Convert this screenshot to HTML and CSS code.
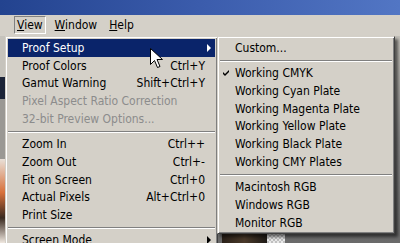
FILE: index.html
```html
<!DOCTYPE html>
<html>
<head>
<meta charset="utf-8">
<link rel="stylesheet" href="styles.css">
</head>
<body>
<div class="screen">
  <div class="titlebar"></div>
  <div class="menubar">
    <span class="mb-item pressed"><u>V</u>iew</span>
    <span class="mb-item"><u>W</u>indow</span>
    <span class="mb-item"><u>H</u>elp</span>
  </div>
  <div class="workspace">
    <div class="toolbox">
      <div class="tb tb-gray"></div>
      <div class="tb tb-dark"></div>
      <div class="tb tb-mid"></div>
      <div class="tb tb-photo"></div>
    </div>
    <div class="canvas">
      <div class="photo">
        <div class="ph-dark"></div>
        <div class="ph-check"></div>
      </div>
    </div>

    <div class="menu main-menu">
      <div class="row active"><span class="label">Proof Setup</span><span class="arrow white"></span></div>
      <div class="row"><span class="label">Proof Colors</span><span class="key">Ctrl+Y</span></div>
      <div class="row"><span class="label">Gamut Warning</span><span class="key">Shift+Ctrl+Y</span></div>
      <div class="row disabled"><span class="label">Pixel Aspect Ratio Correction</span></div>
      <div class="row disabled"><span class="label">32-bit Preview Options...</span></div>
      <div class="sep"></div>
      <div class="row"><span class="label">Zoom In</span><span class="key">Ctrl++</span></div>
      <div class="row"><span class="label">Zoom Out</span><span class="key">Ctrl+-</span></div>
      <div class="row"><span class="label">Fit on Screen</span><span class="key">Ctrl+0</span></div>
      <div class="row"><span class="label">Actual Pixels</span><span class="key">Alt+Ctrl+0</span></div>
      <div class="row"><span class="label">Print Size</span></div>
      <div class="sep"></div>
      <div class="row"><span class="label">Screen Mode</span><span class="arrow"></span></div>
    </div>

    <div class="menu sub-menu">
      <div class="row"><span class="label">Custom...</span></div>
      <div class="sep"></div>
      <div class="row checked"><svg class="check" width="7" height="7" viewBox="0 0 7 7"><path d="M0 3 L2 5 L6 1 L6 3 L2 7 L0 5 Z" fill="#000"/></svg><span class="label">Working CMYK</span></div>
      <div class="row"><span class="label">Working Cyan Plate</span></div>
      <div class="row"><span class="label">Working Magenta Plate</span></div>
      <div class="row"><span class="label">Working Yellow Plate</span></div>
      <div class="row"><span class="label">Working Black Plate</span></div>
      <div class="row"><span class="label">Working CMY Plates</span></div>
      <div class="sep"></div>
      <div class="row"><span class="label">Macintosh RGB</span></div>
      <div class="row"><span class="label">Windows RGB</span></div>
      <div class="row"><span class="label">Monitor RGB</span></div>
    </div>

    <svg class="cursor" width="14" height="21" viewBox="0 0 14 21">
      <path d="M0.5 0.5 L0.5 16.5 L4.5 12.5 L7.5 19.5 L10 18.5 L7 11.5 L12.5 11.5 Z" fill="#fff" stroke="#000" stroke-width="1" stroke-linejoin="miter"/>
    </svg>
  </div>
</div>
</body>
</html>
```

FILE: styles.css
```css
html, body {
  margin: 0;
  padding: 0;
}
body {
  width: 400px;
  height: 243px;
  overflow: hidden;
  font-family: "DejaVu Sans Condensed", "DejaVu Sans", sans-serif;
  font-stretch: condensed;
  font-size: 12px;
  color: #000;
}
.screen {
  width: 400px;
  height: 243px;
  display: flex;
  flex-direction: column;
}
.titlebar {
  height: 15px;
  background: linear-gradient(90deg, #23438f 0%, #3b5cac 50%, #5276c4 100%);
}
.menubar {
  height: 22px;
  background: #d4d0c8;
  display: flex;
  align-items: center;
  padding-left: 14px;
  box-sizing: border-box;
  gap: 5px;
}
.mb-item {
  padding: 1px 2px 1px 2px;
  border: 1px solid transparent;
  line-height: 14px;
}
.mb-item + .mb-item { margin-left: 1px; }
.mb-item.pressed {
  border-color: #808080 #fff #fff #808080;
}
.workspace {
  position: relative;
  flex: 1;
  display: flex;
}
.toolbox {
  width: 6px;
  display: flex;
  flex-direction: column;
}
.tb-gray { height: 41px; background: #c6c3bc; }
.tb-dark { height: 22px; background: #1c2438; }
.tb-mid { height: 60px; background: #9a9894; }
.tb-photo { flex: 1; background: linear-gradient(180deg, #e8e0d8 0%, #d8703a 40%, #3a2a20 70%, #f0e8e0 100%); }
.canvas {
  flex: 1;
  background: linear-gradient(180deg, #c4c1ba 0%, #8a8a8a 50%, #6a6a6a 100%);
  padding: 197px 0 0 216px;
  box-sizing: border-box;
}
.photo {
  display: flex;
  height: 10px;
}
.ph-dark {
  width: 45px;
  background: linear-gradient(90deg, #2a2018, #4a3a2a 50%, #1e1a16);
}
.ph-check {
  width: 18px;
  background: repeating-conic-gradient(#e8e8e8 0 25%, #c0c0c0 0 50%) 0 0 / 4px 4px;
}

.menu {
  position: absolute;
  top: 0;
  background: #d4d0c8;
  border: 1px solid;
  border-color: #d4d0c8 #404040 #404040 #d4d0c8;
  box-shadow: inset 1px 1px #fff, inset -1px -1px #808080;
  padding: 2px 2px 2px 2px;
  box-sizing: border-box;
}
.main-menu {
  left: 5px;
  width: 213px;
}
.sub-menu {
  left: 217px;
  width: 178px;
  padding-bottom: 1px;
  box-shadow: inset 1px 1px #fff, inset -1px -1px #808080, 3px 3px 3px rgba(0,0,0,0.55);
}
.row {
  height: 17.75px;
  display: flex;
  align-items: center;
  padding: 0 10px 0 14px;
  white-space: nowrap;
  position: relative;
}
.sub-menu .row { padding-left: 15px; }
.row.active {
  background: #0a246a;
  color: #fff;
}
.row.disabled { color: #8c8c8c; }
.key { margin-left: auto; }
.arrow {
  margin-left: auto;
  margin-right: -6px;
  width: 0;
  height: 0;
  border-left: 4px solid #000;
  border-top: 4px solid transparent;
  border-bottom: 4px solid transparent;
}
.arrow.white { border-left-color: #fff; }
.check {
  position: absolute;
  left: 3px;
  top: 5px;
}
.sep {
  height: 7.5px;
  display: flex;
  align-items: center;
}
.sep::before {
  content: "";
  flex: 1;
  height: 0;
  border-top: 1px solid #808080;
  border-bottom: 1px solid #fff;
}
.cursor {
  position: absolute;
  left: 150px;
  top: 12px;
}
```
